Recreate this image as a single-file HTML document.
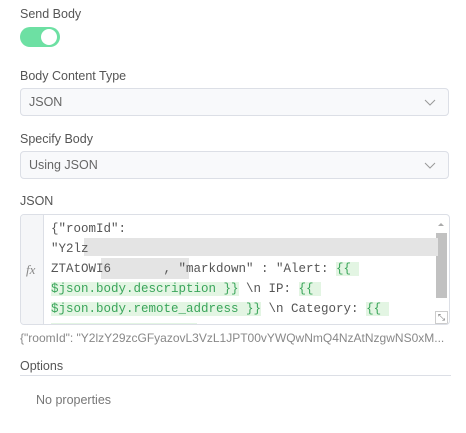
<!DOCTYPE html>
<html><head><style>
body{margin:0;width:466px;height:433px;background:#fff;font-family:"Liberation Sans",sans-serif;color:#555;position:relative;overflow:hidden}
.a{position:absolute}
.lbl{font-size:12.5px;color:#555;left:20px}
.sel{left:20px;width:429px;height:28px;border:1px solid #dcdfe6;border-radius:4px;background:#f8f9fb;box-sizing:border-box;font-size:12.5px;color:#666;line-height:27px;padding-left:8px}
.sel svg{position:absolute;right:12px;top:10px}
.code{font-family:"Liberation Mono",monospace;font-size:12.5px;color:#555;left:51px;white-space:pre;line-height:20px}
.g{background:#e3f5e3;color:#3aa55a}
.blur{background:#e4e4e4}
</style></head><body>
<div class="a lbl" style="top:7px">Send Body</div>
<div class="a" style="left:20px;top:27px;width:40px;height:20px;border-radius:10px;background:#6de0a3"></div>
<div class="a" style="left:41px;top:29px;width:16px;height:16px;border-radius:50%;background:#fff"></div>
<div class="a lbl" style="top:69px">Body Content Type</div>
<div class="a sel" style="top:88px">JSON<svg width="12" height="7"><path d="M1 1l5 5 5-5" stroke="#999" fill="none"/></svg></div>
<div class="a lbl" style="top:132px">Specify Body</div>
<div class="a sel" style="top:151px">Using JSON<svg width="12" height="7"><path d="M1 1l5 5 5-5" stroke="#999" fill="none"/></svg></div>
<div class="a lbl" style="top:194px">JSON</div>
<div class="a" style="left:20px;top:214px;width:430px;height:111px;border:1px solid #dcdfe6;border-radius:4px;box-sizing:border-box;overflow:hidden">
 <div class="a" style="left:0;top:0;width:22px;height:111px;background:#f5f6f8;border-right:1px solid #dcdfe6"></div>
 <div class="a" style="left:5px;top:47px;font-family:'Liberation Serif',serif;font-style:italic;font-size:13px;color:#888">fx</div>
 <div class="a" style="left:415px;top:18px;width:11px;height:65px;background:#c1c1c1"></div>
 <div class="a" style="left:417px;top:5px;width:0;height:0;border:3px solid transparent;border-bottom-color:#aaa"></div>
 <div class="a" style="left:414px;top:96px;width:13px;height:13px;border:1px solid #ccc;background:#fff;box-sizing:border-box;font-size:9px;line-height:10px;text-align:center;color:#777">⤡</div>
 <div class="a" style="left:30px;top:108px;width:146px;height:5px;background:#e3f5e3"></div>
</div>
<div class="a blur" style="left:84px;top:238px;width:354px;height:18px"></div>
<div class="a blur" style="left:101px;top:258px;width:88px;height:21px"></div>
<div class="a code" style="top:219px">{"roomId":
"Y2lz
ZTAtOWI6       , "markdown" : "Alert: <span class="g">{{ </span>
<span class="g">$json.body.description }}</span> \n IP: <span class="g">{{ </span>
<span class="g">$json.body.remote_address }}</span> \n Category: <span class="g">{{ </span></div>
<div class="a" style="left:20px;top:331px;font-size:12px;color:#888;white-space:nowrap">{"roomId": "Y2lzY29zcGFyazovL3VzL1JPT00vYWQwNmQ4NzAtNzgwNS0xM...</div>
<div class="a lbl" style="top:359px;color:#555">Options</div>
<div class="a" style="left:20px;top:375px;width:431px;height:1px;background:#dcdfe6"></div>
<div class="a" style="left:36px;top:393px;font-size:12.5px;color:#777">No properties</div>
</body></html>
